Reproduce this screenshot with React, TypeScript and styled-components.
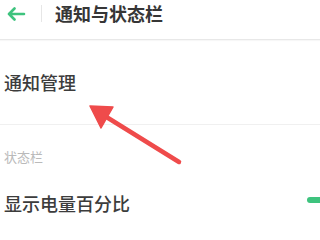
import React from "react";
import styled, { createGlobalStyle } from "styled-components";

const Global = createGlobalStyle`
  html, body { margin: 0; padding: 0; background: #ffffff; }
  body { width: 320px; height: 240px; overflow: hidden; }
`;

const Page = styled.div`
  position: relative;
  width: 320px;
  height: 240px;
  overflow: hidden;
  background: #fff;
  font-family: "Noto Sans CJK SC", "Noto Sans", sans-serif;
  color: #3a3a3a;
`;

const Header = styled.div`
  height: 39px;
  display: flex;
  align-items: center;
  padding-left: 6px;
  border-bottom: 1px solid #e8e8e8;
  box-shadow: 0 1px 1px rgba(0,0,0,0.03);
`;

const Back = styled.svg`
  width: 20px;
  height: 14px;
  margin-top: -12px;
`;

const Sep = styled.div`
  width: 1px;
  height: 17px;
  background: #e6e6e6;
  margin-left: 15px;
  margin-top: -12px;
`;

const Title = styled.div`
  margin-left: 13px;
  margin-top: -13px;
  font-size: 18px;
  font-weight: 600;
  line-height: 20px;
  color: #363636;
`;

const Row = styled.div<{ $h: number }>`
  height: ${(p) => p.$h}px;
  display: flex;
  align-items: center;
  justify-content: space-between;
  padding-left: 4px;
`;

const RowText = styled.div`
  font-size: 18px;
  font-weight: 500;
  line-height: 20px;
  color: #3c3c3c;
`;

const Divider = styled.div`
  height: 1px;
  background: #f0f0f0;
`;

const SectionLabel = styled.div`
  padding: 25px 0 0 4px;
  font-size: 13px;
  line-height: 14px;
  color: #bababa;
`;

const Toggle = styled.div`
  width: 24px;
  height: 6px;
  border-radius: 3px;
  background: #3ec37e;
  margin-right: -11px;
  margin-top: -6px;
`;

const Annotation = styled.svg`
  position: absolute;
  left: 0;
  top: 0;
  width: 320px;
  height: 240px;
  pointer-events: none;
`;

export default function App() {
  return (
    <Page>
      <Global />
      <Header>
        <Back viewBox="0 0 20 14">
          <path d="M18 7H3M8.5 1.5L3 7l5.5 5.5" fill="none" stroke="#3ec37e" strokeWidth="2.6" strokeLinecap="round" strokeLinejoin="round" />
        </Back>
        <Sep />
        <Title>通知与状态栏</Title>
      </Header>
      <Row $h={84}>
        <RowText>通知管理</RowText>
      </Row>
      <Divider />
      <SectionLabel>状态栏</SectionLabel>
      <Row $h={78}>
        <RowText>显示电量百分比</RowText>
        <Toggle />
      </Row>
      <Annotation viewBox="0 0 320 240">
        <line x1="179" y1="162" x2="100" y2="113" stroke="#ef4b4b" strokeWidth="4.5" strokeLinecap="round" />
        <polygon points="90,106 113,107 101,128" fill="#ef4b4b" stroke="#ef4b4b" strokeWidth="1.5" strokeLinejoin="round" />
      </Annotation>
    </Page>
  );
}
